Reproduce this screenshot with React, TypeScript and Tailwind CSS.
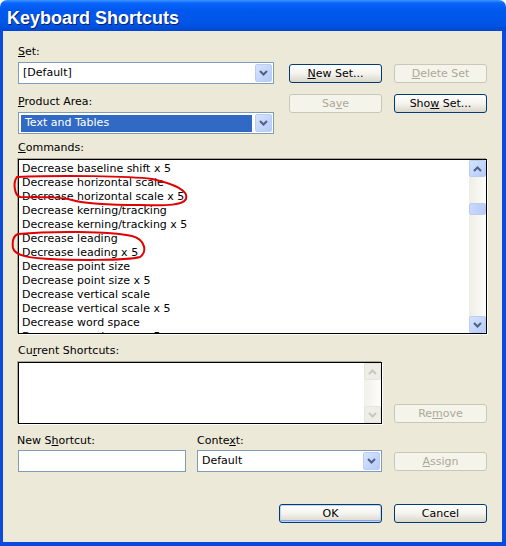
const commands = [
  "Decrease baseline shift x 5",
  "Decrease horizontal scale",
  "Decrease horizontal scale x 5",
  "Decrease kerning/tracking",
  "Decrease kerning/tracking x 5",
  "Decrease leading",
  "Decrease leading x 5",
  "Decrease point size",
  "Decrease point size x 5",
  "Decrease vertical scale",
  "Decrease vertical scale x 5",
  "Decrease word space",
  "Decrease word space x 5",
];

function Chevron({ up, color = "#4D6185" }: { up?: boolean; color?: string }) {
  return (
    <svg width="9" height="6" viewBox="0 0 9 6">
      <path
        d={up ? "M1 5 L4.5 1.5 L8 5" : "M1 1 L4.5 4.5 L8 1"}
        fill="none"
        stroke={color}
        strokeWidth="2"
      />
    </svg>
  );
}

function ScrollBtn({ up, disabled }: { up?: boolean; disabled?: boolean }) {
  return (
    <div
      className={`flex h-[17px] w-[17px] items-center justify-center rounded-[2px] border ${
        disabled
          ? "border-[#E6E5DD] bg-[#EEEDE6]"
          : "border-[#BCCDF4] bg-gradient-to-br from-[#D6E3FE] to-[#B6CBF8]"
      }`}
    >
      <Chevron up={up} color={disabled ? "#C9C8C0" : "#4D6185"} />
    </div>
  );
}

function Btn({
  children,
  disabled,
  primary,
  className = "",
}: {
  children: React.ReactNode;
  disabled?: boolean;
  primary?: boolean;
  className?: string;
}) {
  return (
    <div
      className={`flex h-[19px] items-center justify-center rounded-[3px] border leading-[13px] ${
        disabled
          ? "border-[#C9C7BA] bg-[#F5F4EA] text-[#ACA899]"
          : "border-[#003C74] bg-gradient-to-b from-white via-[#F4F3EE] to-[#DAD6CA] text-black"
      } ${primary ? "shadow-[inset_0_0_0_1px_#C2D3F7,inset_0_-1px_0_1px_#89A8EA]" : ""} ${className}`}
    >
      <span>{children}</span>
    </div>
  );
}

function Combo({ text, selected, className = "" }: { text: string; selected?: boolean; className?: string }) {
  return (
    <div className={`flex h-[22px] items-center border border-[#7F9DB9] bg-white pl-[2px] pr-px ${className}`}>
      {selected ? (
        <div className="mr-[3px] flex h-[17px] flex-1 items-center bg-[#316AC5] pl-[4px] text-white">{text}</div>
      ) : (
        <div className="flex-1 pl-[2px]">{text}</div>
      )}
      <div className="flex h-[18px] w-[17px] items-center justify-center rounded-[2px] border border-[#BCCDF4] bg-gradient-to-br from-[#D6E3FE] to-[#B6CBF8]">
        <Chevron />
      </div>
    </div>
  );
}

function Label({ children, className = "" }: { children: React.ReactNode; className?: string }) {
  return <div className={`h-[13px] leading-[13px] ${className}`}>{children}</div>;
}

export default function App() {
  return (
    <div className="relative h-[546px] w-[506px] bg-white font-['DejaVu_Sans',sans-serif] text-[11px] text-black">
      <div className="flex h-[546px] w-[506px] flex-col overflow-hidden rounded-t-[7px]">
        <div className="flex h-[31px] shrink-0 items-center bg-[linear-gradient(180deg,#3d95ff_0px,#0a66fb_3px,#0058ee_10px,#0055e5_24px,#0047d2_31px)] pl-[7px] pt-[5px]">
          <span className="font-['Liberation_Sans',sans-serif] text-[18px] font-bold text-white [text-shadow:1px_1px_0_#0a1e6a]">
            Keyboard Shortcuts
          </span>
        </div>
        <div className="flex h-[515px] flex-col border-b-4 border-l-[3px] border-r-4 border-[#0A4BDE] bg-[#ECE9D8] pl-[15px]">
          <div className="mt-[14px] flex">
            <div className="w-[256px]">
              <Label>
                <u>S</u>et:
              </Label>
              <Combo text="[Default]" className="mt-[4px]" />
              <Label className="mt-[11px]">
                <u>P</u>roduct Area:
              </Label>
              <Combo text="Text and Tables" selected className="mt-[4px]" />
            </div>
            <div className="ml-[15px] w-[93px]">
              <Btn className="mt-[19px]">
                <u>N</u>ew Set...
              </Btn>
              <Btn disabled className="mt-[11px]">
                Sa<u>v</u>e
              </Btn>
            </div>
            <div className="ml-[12px] w-[93px]">
              <Btn disabled className="mt-[19px]">
                <u>D</u>elete Set
              </Btn>
              <Btn className="mt-[11px]">
                Sho<u>w</u> Set...
              </Btn>
            </div>
          </div>

          <Label className="mt-[7px]">
            <u>C</u>ommands:
          </Label>
          <div className="mt-[5px] flex h-[175px] w-[469px] border border-black bg-white shadow-[-1px_-1px_0_#ACA899,1px_1px_0_#fff]">
            <div className="flex-1 overflow-hidden pl-[3px] pt-[2px]">
              {commands.map((c) => (
                <div key={c} className="h-[14px] whitespace-nowrap leading-[14px]">
                  {c}
                </div>
              ))}
            </div>
            <div className="flex w-[17px] flex-col bg-gradient-to-r from-[#EEEDE5] to-[#FDFDFA]">
              <ScrollBtn up />
              <div className="mt-[26px] h-[12px] w-[17px] rounded-[2px] border border-[#BCCDF4] bg-gradient-to-r from-[#C9D8FC] to-[#B8CCF8]" />
              <div className="flex-1" />
              <ScrollBtn />
            </div>
          </div>

          <Label className="mt-[10px]">
            Cu<u>r</u>rent Shortcuts:
          </Label>
          <div className="mt-[5px] flex items-start">
            <div className="flex h-[62px] w-[364px] border border-black bg-white shadow-[-1px_-1px_0_#ACA899,1px_1px_0_#fff]">
              <div className="flex-1" />
              <div className="flex w-[17px] flex-col justify-between bg-gradient-to-r from-[#F1F0EA] to-[#FDFDFA]">
                <ScrollBtn up disabled />
                <ScrollBtn disabled />
              </div>
            </div>
            <Btn disabled className="ml-[12px] mt-[42px] w-[93px]">
              Re<u>m</u>ove
            </Btn>
          </div>

          <div className="mt-[10px] flex items-start">
            <div className="w-[168px]">
              <Label className="-ml-px">
                New S<u>h</u>ortcut:
              </Label>
              <div className="mt-[3px] h-[22px] border border-[#7F9DB9] bg-white" />
            </div>
            <div className="ml-[11px] w-[185px]">
              <Label>
                Conte<u>x</u>t:
              </Label>
              <Combo text="Default" className="mt-[3px]" />
            </div>
            <Btn disabled className="ml-[12px] mt-[18px] w-[93px]">
              <u>A</u>ssign
            </Btn>
          </div>

          <div className="mt-[32px] flex justify-end pr-[15px]">
            <Btn primary className="w-[103px]">
              OK
            </Btn>
            <Btn className="ml-[12px] w-[93px]">Cancel</Btn>
          </div>
        </div>
      </div>

      <svg className="pointer-events-none absolute left-0 top-0" width="506" height="546" viewBox="0 0 506 546">
        <path
          d="M17 177 C60 175,130 176,152 179 C175 184,189 191,186 199 C183 205,168 206,140 205 C110 205,86 204,72 200 C62 197,48 197,20 197 C14 195,13 182,17 177 Z"
          fill="none"
          stroke="#E10000"
          strokeWidth="2"
        />
        <path
          d="M18 234 C50 231,110 231,132 236 C146 240,147 252,140 257 C125 261,70 260,50 259 C30 258,15 256,13 248 C12 241,13 236,18 234 Z"
          fill="none"
          stroke="#E10000"
          strokeWidth="2"
        />
      </svg>
    </div>
  );
}
